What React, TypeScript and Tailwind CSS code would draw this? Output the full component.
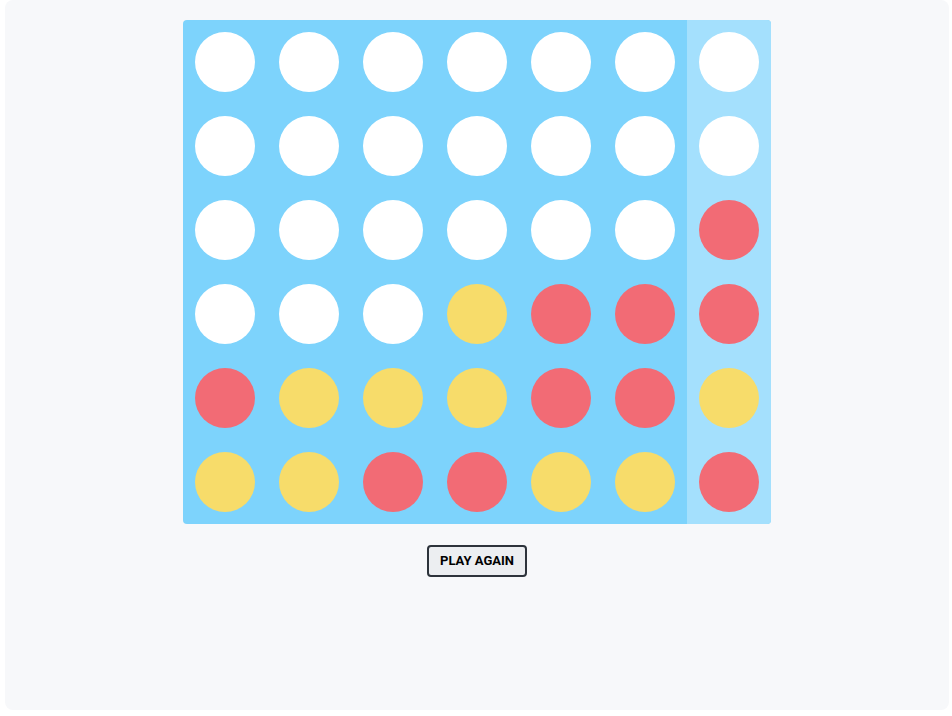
import { useState } from "react";

type Cell = "W" | "R" | "Y";

const initialBoard: Cell[][] = [
  ["W", "W", "W", "W", "W", "W", "W"],
  ["W", "W", "W", "W", "W", "W", "W"],
  ["W", "W", "W", "W", "W", "W", "R"],
  ["W", "W", "W", "Y", "R", "R", "R"],
  ["R", "Y", "Y", "Y", "R", "R", "Y"],
  ["Y", "Y", "R", "R", "Y", "Y", "R"],
];

const discColor: Record<Cell, string> = {
  W: "bg-white",
  R: "bg-[#f26b75]",
  Y: "bg-[#f7dc6a]",
};

export default function App() {
  const [board] = useState(initialBoard);
  const [hoverCol, setHoverCol] = useState<number | null>(6);

  return (
    <div className="min-h-screen bg-white pl-[5px] pr-[3px] pb-[6px]" style={{ fontFamily: "Roboto, 'Liberation Sans', sans-serif" }}>
      <div className="h-[710px] rounded-lg bg-[#f7f8fa] pt-[20px] flex flex-col items-center">
        <div className="flex rounded overflow-hidden bg-[#7dd3fc]" onMouseLeave={() => setHoverCol(null)}>
          {board[0].map((_, c) => (
            <div
              key={c}
              onMouseEnter={() => setHoverCol(c)}
              className={`flex flex-col ${hoverCol === c ? "bg-[#a4e0fd]" : ""}`}
            >
              {board.map((row, r) => (
                <div key={r} className="w-[84px] h-[84px] p-[12px]">
                  <div className={`w-[60px] h-[60px] rounded-full ${discColor[row[c]]}`} />
                </div>
              ))}
            </div>
          ))}
        </div>
        <button className="mt-[21px] h-[32px] px-[11px] rounded border-2 border-[#2d333b] bg-[#eceef1] text-[13px] font-bold text-black">
          PLAY AGAIN
        </button>
      </div>
    </div>
  );
}
